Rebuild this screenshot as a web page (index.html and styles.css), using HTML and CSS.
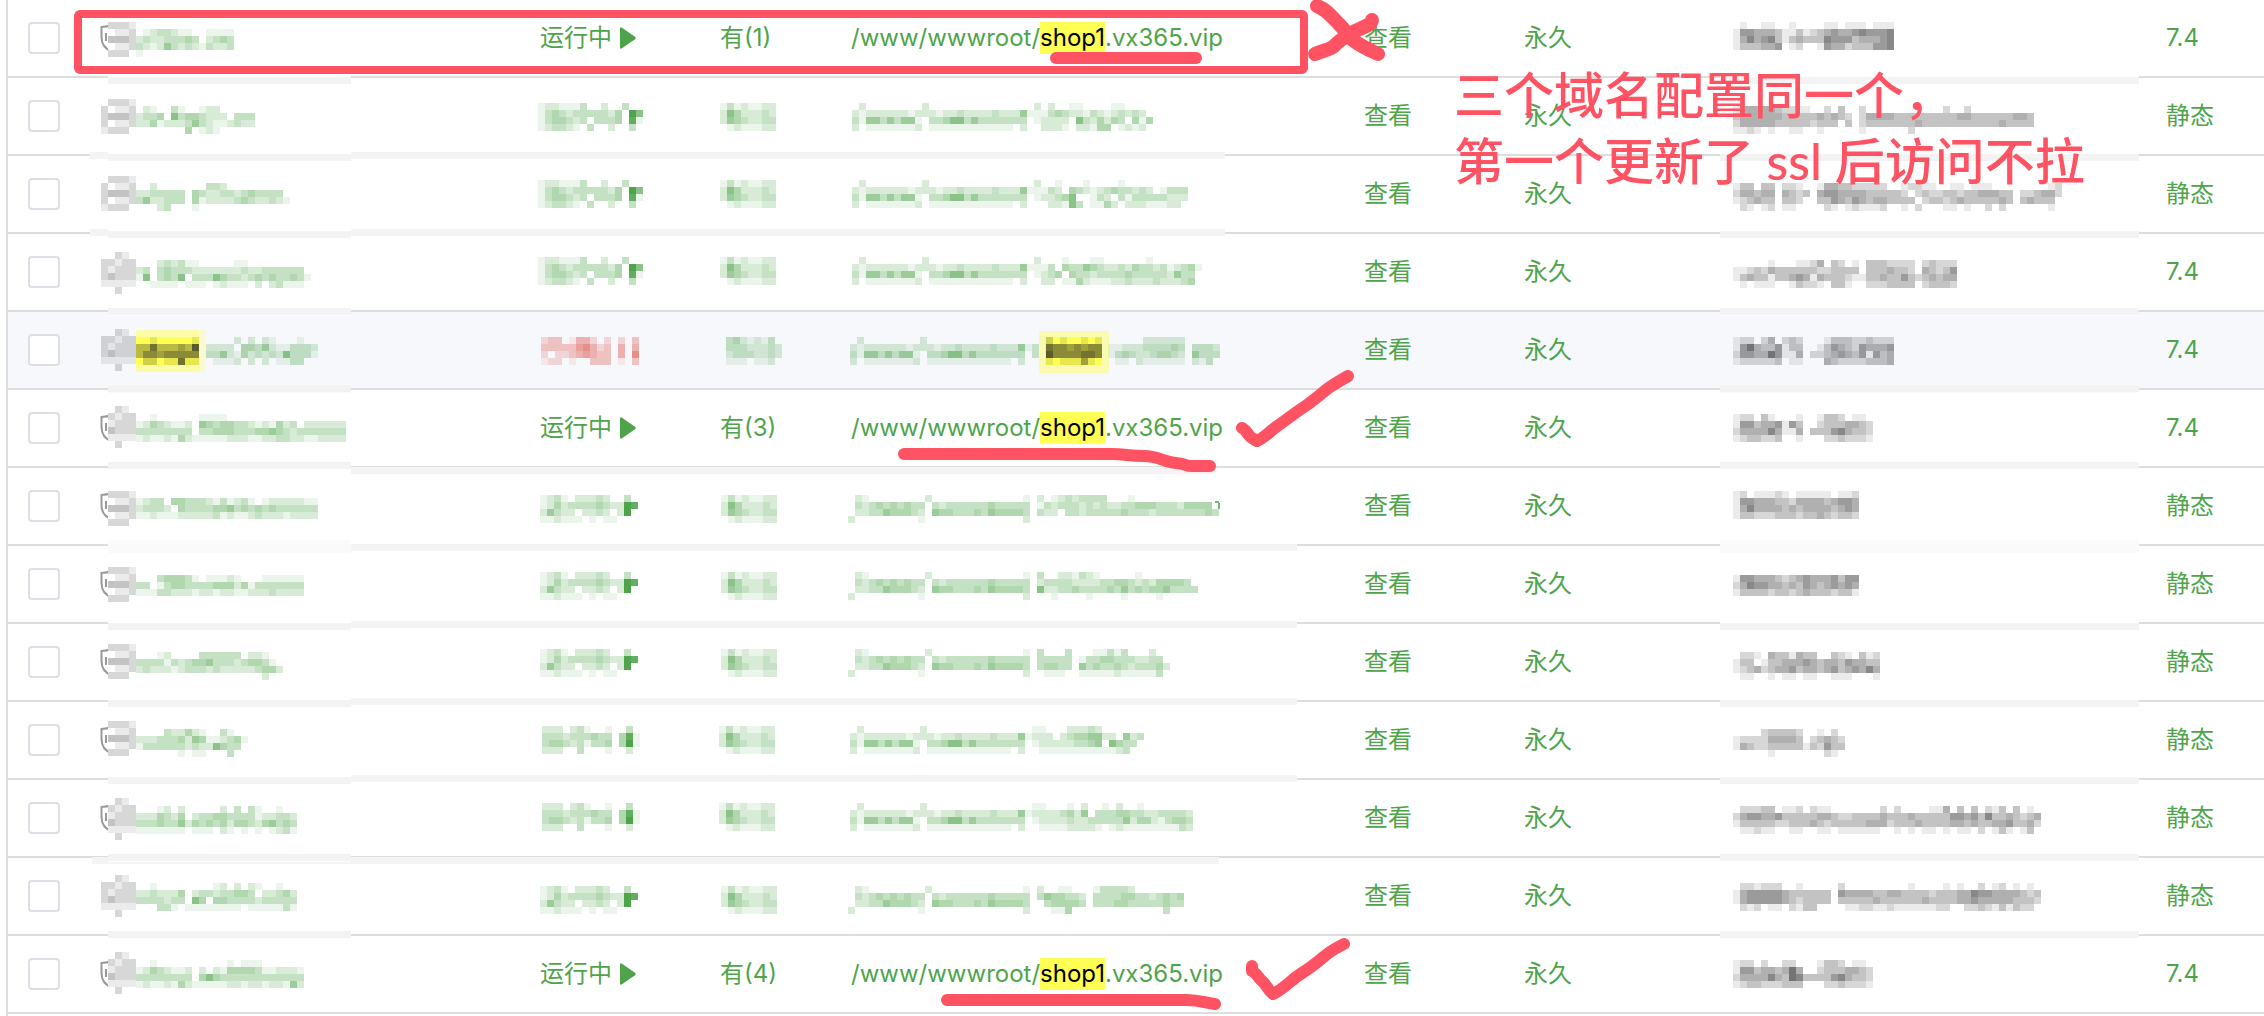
FILE: index.html
```html
<!DOCTYPE html>
<html lang="zh-CN">
<head>
  <meta charset="UTF-8">
  <meta name="viewport" content="width=device-width, initial-scale=1">
  <title>网站列表</title>
  <link rel="stylesheet" href="styles.css">
</head>
<body>

<svg class="defs" aria-hidden="true">
  <symbol id="shield" viewBox="0 0 24 30">
    <path d="M12 1.500 C9 3 5 4 1.500 4 V14 C1.500 21 5 26 12 28.500 C19 26 22.500 21 22.500 14 V4 C19 4 15 3 12 1.500Z"/>
    <path d="M6 10 V18 M10 12 H16 M10 17 H16"/>
  </symbol>
  <symbol id="play" viewBox="0 0 16 22">
    <path d="M0 1.500 Q0 -.5 2 .7 L15 9.800 Q16.500 11 15 12.200 L2 21.300 Q0 22.500 0 20.500Z"/>
  </symbol>
</svg>

<div class="sites">
  <table class="site-table">
    <colgroup>
      <col class="col-check">
      <col class="col-name">
      <col class="col-status">
      <col class="col-backup">
      <col class="col-path">
      <col class="col-quota">
      <col class="col-expire">
      <col class="col-remark">
      <col class="col-php">
    </colgroup>
    <tbody>
      <tr>
        <td class="check"><input type="checkbox" aria-label="选择网站 1"></td>
        <td><svg class="shield"><use href="#shield"/></svg></td>
        <td><a href="#" class="status">运行中<svg class="play"><use href="#play"/></svg></a></td>
        <td><a href="#">有(1)</a></td>
        <td><a href="#">/www/wwwroot/<mark>shop1</mark>.vx365.vip</a></td>
        <td><a href="#">查看</a></td>
        <td><a href="#">永久</a></td>
        <td></td>
        <td><a href="#">7.4</a></td>
      </tr>
      <tr>
        <td class="check"><input type="checkbox" aria-label="选择网站 2"></td>
        <td></td><td></td><td></td><td></td>
        <td><a href="#">查看</a></td>
        <td><a href="#">永久</a></td>
        <td></td>
        <td><a href="#">静态</a></td>
      </tr>
      <tr>
        <td class="check"><input type="checkbox" aria-label="选择网站 3"></td>
        <td></td><td></td><td></td><td></td>
        <td><a href="#">查看</a></td>
        <td><a href="#">永久</a></td>
        <td></td>
        <td><a href="#">静态</a></td>
      </tr>
      <tr>
        <td class="check"><input type="checkbox" aria-label="选择网站 4"></td>
        <td></td><td></td><td></td><td></td>
        <td><a href="#">查看</a></td>
        <td><a href="#">永久</a></td>
        <td></td>
        <td><a href="#">7.4</a></td>
      </tr>
      <tr class="active">
        <td class="check"><input type="checkbox" aria-label="选择网站 5"></td>
        <td></td><td></td><td></td><td></td>
        <td><a href="#">查看</a></td>
        <td><a href="#">永久</a></td>
        <td></td>
        <td><a href="#">7.4</a></td>
      </tr>
      <tr>
        <td class="check"><input type="checkbox" aria-label="选择网站 6"></td>
        <td><svg class="shield"><use href="#shield"/></svg></td>
        <td><a href="#" class="status">运行中<svg class="play"><use href="#play"/></svg></a></td>
        <td><a href="#">有(3)</a></td>
        <td><a href="#">/www/wwwroot/<mark>shop1</mark>.vx365.vip</a></td>
        <td><a href="#">查看</a></td>
        <td><a href="#">永久</a></td>
        <td></td>
        <td><a href="#">7.4</a></td>
      </tr>
      <tr>
        <td class="check"><input type="checkbox" aria-label="选择网站 7"></td>
        <td><svg class="shield"><use href="#shield"/></svg></td>
        <td></td><td></td><td></td>
        <td><a href="#">查看</a></td>
        <td><a href="#">永久</a></td>
        <td></td>
        <td><a href="#">静态</a></td>
      </tr>
      <tr>
        <td class="check"><input type="checkbox" aria-label="选择网站 8"></td>
        <td><svg class="shield"><use href="#shield"/></svg></td>
        <td></td><td></td><td></td>
        <td><a href="#">查看</a></td>
        <td><a href="#">永久</a></td>
        <td></td>
        <td><a href="#">静态</a></td>
      </tr>
      <tr>
        <td class="check"><input type="checkbox" aria-label="选择网站 9"></td>
        <td><svg class="shield"><use href="#shield"/></svg></td>
        <td></td><td></td><td></td>
        <td><a href="#">查看</a></td>
        <td><a href="#">永久</a></td>
        <td></td>
        <td><a href="#">静态</a></td>
      </tr>
      <tr>
        <td class="check"><input type="checkbox" aria-label="选择网站 10"></td>
        <td><svg class="shield"><use href="#shield"/></svg></td>
        <td></td><td></td><td></td>
        <td><a href="#">查看</a></td>
        <td><a href="#">永久</a></td>
        <td></td>
        <td><a href="#">静态</a></td>
      </tr>
      <tr>
        <td class="check"><input type="checkbox" aria-label="选择网站 11"></td>
        <td><svg class="shield"><use href="#shield"/></svg></td>
        <td></td><td></td><td></td>
        <td><a href="#">查看</a></td>
        <td><a href="#">永久</a></td>
        <td></td>
        <td><a href="#">静态</a></td>
      </tr>
      <tr>
        <td class="check"><input type="checkbox" aria-label="选择网站 12"></td>
        <td></td><td></td><td></td><td></td>
        <td><a href="#">查看</a></td>
        <td><a href="#">永久</a></td>
        <td></td>
        <td><a href="#">静态</a></td>
      </tr>
      <tr>
        <td class="check"><input type="checkbox" aria-label="选择网站 13"></td>
        <td><svg class="shield"><use href="#shield"/></svg></td>
        <td><a href="#" class="status">运行中<svg class="play"><use href="#play"/></svg></a></td>
        <td><a href="#">有(4)</a></td>
        <td><a href="#">/www/wwwroot/<mark>shop1</mark>.vx365.vip</a></td>
        <td><a href="#">查看</a></td>
        <td><a href="#">永久</a></td>
        <td></td>
        <td><a href="#">7.4</a></td>
      </tr>
    </tbody>
  </table>

  <!-- mosaic over the private columns -->
  <svg class="layer" id="mosaic" aria-hidden="true"></svg>

  <!-- marker strokes -->
  <svg class="layer marker" aria-hidden="true">
    <rect x="78" y="14" width="1226" height="56" rx="2"/>
    <path class="pen" d="M1056 58 H1196"/>
    <path class="pen cross" d="M1317 6 C1326 9 1332 17 1339 24 S1347 35 1353 40 S1367 49 1378 54"/>
    <path class="pen cross" d="M1372 20 C1371 26 1360 28 1353 32 S1338 42 1334 46 S1323 50 1315 54"/>
    <path class="pen" d="M904 454 H1112 C1124 454 1130 456 1144 456 S1164 462 1176 463 S1184 466 1192 466 H1210"/>
    <path class="pen" d="M1242 428 C1246 429 1248 436 1252 438 L1257 441 C1266 437 1270 431 1276 427 S1296 412 1304 407 S1324 391 1330 387 S1343 379 1348 376"/>
    <path class="pen" d="M947 1000 H1186 C1200 1000 1206 1003 1215 1004"/>
    <path class="pen" d="M1252 966 V971 C1258 974 1258 978 1262 981 S1267 989 1273 994 C1284 989 1292 979 1302 973 S1320 960 1326 955 S1338 947 1344 944"/>
  </svg>
  <p class="note">三个域名配置同一个，<br>第一个更新了 ssl 后访问不拉</p>
</div>

<script src="mosaic.js"></script>
</body>
</html>
```
FILE: styles.css
```css
*, *:after, *:before {
  box-sizing: border-box;
}
body {
  background: #fff;
  color: #4fa44b;
  font-family: Inter, "Noto Sans CJK SC", sans-serif;
  font-size: 24px;
  line-height: 32px;
  margin: 0;
}
a {
  color: inherit;
  text-decoration: none;
}
.defs {
  display: block;
  height: 0;
  width: 0;
}
.sites {
  border-left: 2px solid #ddd;
  margin-left: 6px;
  min-height: 100vh;
  overflow: hidden;
  position: relative;
}
.site-table {
  border-collapse: separate;
  border-spacing: 0;
  table-layout: fixed;
  width: 100%;
}
.col-check { width: 92px; }
.col-name { width: 440px; }
.col-status { width: 180px; }
.col-backup { width: 131px; }
.col-path { width: 513px; }
.col-quota { width: 160px; }
.col-expire { width: 209px; }
.col-remark { width: 433px; }

td {
  border-bottom: 2px solid #ddd;
  height: 78px;
  padding: 0;
  vertical-align: middle;
  white-space: nowrap;
}
.check {
  padding-left: 20px;
}
.active td {
  background: #f6f8fc;
}
input[type=checkbox] {
  appearance: none;
  background: #fff;
  border: 2px solid #dcdfe6;
  border-radius: 4px;
  cursor: pointer;
  display: block;
  height: 32px;
  margin: 0;
  width: 32px;
}
mark {
  background: #ffff54;
  color: #000;
  display: inline-block;
}
.shield {
  display: block;
  fill: none;
  height: 30px;
  stroke: #999;
  stroke-width: 2;
  width: 24px;
}
.status {
  align-items: center;
  display: flex;
  gap: 8px;
}
.play {
  fill: #4fa44b;
  height: 22px;
  width: 16px;
}

/* overlays are drawn in page coordinates, the table starts at 8px */
.layer {
  height: 100%;
  left: -8px;
  overflow: visible;
  pointer-events: none;
  position: absolute;
  top: 0;
  width: 100%;
}
.marker {
  fill: none;
  stroke: #ff5263;
  stroke-width: 8;
}
.pen {
  stroke-linecap: round;
  stroke-linejoin: round;
  stroke-width: 12;
}
.cross {
  stroke-width: 14;
}
.note {
  color: #ff5263;
  font-family: Lato, "Noto Sans CJK SC", sans-serif;
  font-size: 50px;
  font-weight: 500;
  left: 1446px;
  line-height: 66px;
  margin: 0;
  pointer-events: none;
  position: absolute;
  top: 62px;
  white-space: nowrap;
}
```
FILE: mosaic.js
```js
// every digit is one 7px block, 0 is clear and 9 is the strongest
var CELL = 7;
var GREEN = '#4fa44b';
var GREY = '#4c4c4c';
var RED = '#e0584f';
var svg = document.getElementById('mosaic');

function rect(x, y, w, h, color, alpha) {
  var el = document.createElementNS('http://www.w3.org/2000/svg', 'rect');
  el.setAttribute('x', x);
  el.setAttribute('y', y);
  el.setAttribute('width', w);
  el.setAttribute('height', h);
  el.setAttribute('fill', color);
  el.setAttribute('fill-opacity', alpha);
  svg.appendChild(el);
}

function patch(x, y, color, rows) {
  rows.forEach(function(row, r) {
    row.split('').forEach(function(n, c) {
      if (n !== '0') {
        rect(x + c * CELL, y + r * CELL, CELL, CELL, color, n / 9);
      }
    });
  });
}

// smeared row lines: x, y, width, height
[
  [90, 152, 1135, 7], [90, 229, 1135, 7],
  [351, 467, 864, 7], [351, 544, 946, 7], [351, 621, 946, 7],
  [351, 698, 946, 7], [351, 775, 946, 7], [92, 857, 1127, 7]
].forEach(function(s) {
  if (s[1] !== 467 && s[1] !== 857) {
    rect(s[0], s[1] - 1, s[2], 9, '#fff', 1);
  }
  rect(s[0], s[1], s[2], s[3], '#f4f4f4', 1);
});
[77, 154, 231, 308, 385, 462, 540, 623, 700, 777, 854, 931].forEach(function(y) {
  [[108, 243], [1720, 419]].forEach(function(s) {
    rect(s[0], y - 2, s[1], 10, y === 385 ? '#f9fafc' : '#fff', 1);
    rect(s[0], y, s[1], y === 540 ? 13 : 7, y === 540 ? '#fafafa' : '#f3f3f3', 1);
  });
});

// shields
var shieldA = ['2221', '0112', '3332', '0112', '2220'];
var shieldB = ['0210', '2122', '1222', '3222', '1111', '0200'];
var shieldTops = [22, 99, 176, 252, 329, 406, 491, 567, 644, 721, 798, 875, 952];
shieldTops.forEach(function(y, i) {
  var tall = [3, 4, 5, 10, 11, 12].indexOf(i) > -1;
  rect(108, y, 28, 42, i === 4 ? '#f6f8fc' : '#fff', 1);
  patch(108, y, GREY, tall ? shieldB : shieldA);
  if ([1, 2, 3, 4, 11].indexOf(i) > -1) {
    patch(101, y + 7, GREY, ['2', '2', '2', '1']);
  }
});

// site names
[
  [29, ['01233211001111', '23223334302343', '32125323213223', '10000000000000']],
  [106, ['02100310012200000', '23340634432220333', '22412223532112322', '00000004012100000']],
  [183, ['0020000000332000000000', '2233333043223323433330', '3522333041222234322321', '0002300010000000000000']],
  [260, ['0002323110000011000000000', '2303433322222223223333330', '1603436033364332343433431', '0011110111012111020231110']],
  [414, ['001000000111100000000000000000', '124321120543443321214230222222', '333333330334443334454323333333', '121121421111122211223322112222']],
  [498, ['12330443332131231012222211', '23332043333445343434333333', '11211122222312112322212222']],
  [575, ['000344431011121000111111', '330134433334442413333333', '111332221221221122232222']],
  [652, ['000120000333333022100', '333313234453332344310', '232221233323222223442', '000000000000000000200']],
  [729, ['0000322421003100', '2223334254112341', '1333333232264330', '0000001011000300']],
  [806, ['00012020000020303100100', '22243240233443333122332', '33343352434342443245343', '11111110111021010101231']],
  [883, ['00100000000120202100100', '22322240233233443022342', '33332330640443333233333', '00033101111111101111131']],
  [960, ['001000000000010111000000', '124321120202144443112221', '333333330464333333333333', '121121421111122122122152']]
].forEach(function(n) {
  patch(136, n[0], GREEN, n[1]);
});
rect(136, 330, 63, 42, '#ffff54', 0.5);
rect(199, 330, 7, 42, '#ffff54', 0.25);
rect(136, 337, 63, 28, '#ffff54', 1);
patch(136, 337, '#2c2c20', ['001000001', '336333437', '355455555', '022011611']);
patch(206, 337, GREEN, ['0000202021000100', '2222044352113332', '3352142323263331', '0111202020113300']);

// status, backup count and path
var status1 = ['122111300200300', '134323333324096', '134432303334081', '123321030020030'];
var status2 = ['12310222320030', '12423333432298', '25322022320290', '11211101011000'];
var status3 = ['22202310010030', '33323334330481', '34432313340491', '22200300010020'];
var count = ['13121122', '26422232', '25432233', '01211122'];
var path1 = [
  '02000000002000000000000000',
  '21222222122212232222322251',
  '31553535510334663533333330',
  '20111111120111111111111020'
];
var path2 = [
  '021000000002000000000000010',
  '032343434330323333334333330',
  '022335444320544333435444430',
  '200000000010000000000000020'
];
[
  [103, 538, status1, 720, 852, path1, ['20200110000110000', '11343221321232320', '12222063242430414', '02221022144012120']],
  [180, 538, status1, 720, 852, path1, ['2001000100001000000000', '1132043212343323201333', '1223460013203133333222', '0022163011420222111220']],
  [257, 538, status1, 720, 852, path1, ['200010001100000010000000', '113043354322324332312341', '123404332333343333325330', '022011421112232223222340']],
  [495, 540, status2, 721, 848, path2, ['20123233330001000000000000', '13233323232233444333244440', '32203323333343332333333343']],
  [572, 540, status2, 721, 848, path2, ['300221321000001000000000', '233332222334432324444300', '622334333343534344533330', '001000010000100001000000']],
  [649, 540, status2, 721, 848, path2, ['3000300011313000200', '3333301334433322330', '3443305343343233342', '0111001111121111130']],
  [726, 542, status3, 719, 850, path1, ['1100022232000000', '2220234455220523', '1222223345064330', '0111111111112300']],
  [803, 542, status3, 719, 850, path1, ['110001020010200100000000', '222234250333443322333320', '122223223333352442134430', '011112222101211111111320']],
  [886, 540, status2, 721, 848, path2, ['200110001333320000000000', '354433203333443323434000', '034444303334433333433000', '001140000000000000300000']]
].forEach(function(p) {
  patch(p[1], p[0], GREEN, p[2]);
  patch(p[3], p[0], GREEN, count);
  patch(p[4], p[0], GREEN, p[5]);
  patch(p[4] + p[5][0].length * CELL, p[0], GREEN, p[6]);
});
rect(1215, 501, 4, 2, GREEN, 0.8);
rect(1218, 503, 2, 6, GREEN, 0.8);

patch(541, 337, RED, ['23301442020203', '33333564230404', '20223454330406', '12201003330103']);
patch(719, 337, GREEN, ['034212130', '033322232', '023332232', '011101120']);
patch(850, 337, GREEN, path1);
rect(1032, 344, 7, 14, GREEN, 0.3);
rect(1039, 331, 70, 42, '#ffff54', 0.45);
rect(1045, 337, 57, 28, '#ffff54', 1);
patch(1046, 337, '#2c2c20', ['20100101', '65545455', '75555665', '10111410']);
patch(1108, 337, GREEN, ['0000022222200000', '1122233334303332', '1343223443205333', '0110211111102130']);

// remarks
[
  [22, ['01001100100001101110111', '15544431131234544565556', '14645631343336555344456', '13334450120015442333556']],
  [106, ['144444322110020300200000000000200200000000', '3444444333334343202444433333333344333333443', '2444443333323330302333333343333333333343333', '1121010011001000001000000200000000000000000']],
  [183, ['13303302210014433222220012211001101110000000012', '24434404323045544443333320232233233444330223442', '12343303320033543543443333023323433333430343330', '02101201100002101211120010200011010020200000010']],
  [260, ['000001000112403201033322220232220', '112324333333223333033343320432350', '134331334541433321133433532343440', '010111001322103310022233330233320']],
  [337, ['12202402320001333223222', '15743351330013543254445', '25544751140223454351534', '12222230110004322223334']],
  [414, ['12203100010013320110', '15534451530023334432', '24444641140333564332', '12332230010002232221']],
  [491, ['120111210111110112', '155444332444434554', '146444434344443454', '133222333233432332']],
  [575, ['155444323454445355', '246554434354345454', '133332332343332331']],
  [652, ['022104331433003210312', '133013344454344354433', '123423445344345345464', '011001011011001110001']],
  [729, ['0000233332001020', '1222244443023432', '1432233333132533', '0000010000000210']],
  [806, ['02223301120211000000020200001140303021303010', '24554453333344322333343334333335545363343234', '13333322333432333334442333433334434334453342', '01121100110011011111100101011010110201310130']],
  [883, ['02212220010000020000000001000010100201201010', '14555554333333054444334433332333446554444323', '14555554323333033333433333343333445444443332', '02120110213300001122112111111220022321313220']],
  [960, ['12202002200013320110', '15534434740023334432', '24444643763333564332', '12332223330002232221']]
].forEach(function(r) {
  patch(1733, r[0], GREY, r[1]);
});
```
